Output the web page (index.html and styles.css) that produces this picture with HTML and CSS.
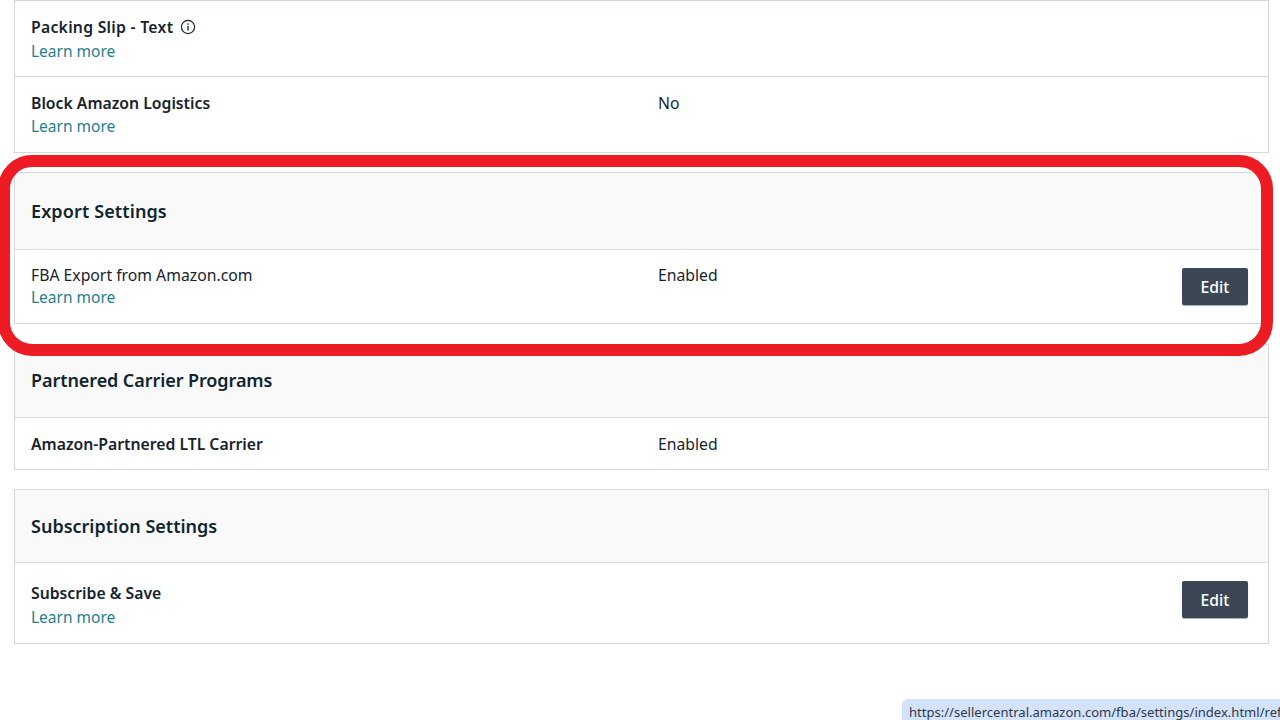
FILE: index.html
```html
<!DOCTYPE html>
<html lang="en">
<head>
<meta charset="utf-8">
<title>FBA Settings</title>
<link rel="stylesheet" href="styles.css">
</head>
<body>
<main class="page">
  <section class="card card-first">
    <div class="row row-76">
      <div class="label"><div class="name name-wide strong">Packing Slip - Text
        <svg class="info" viewBox="0 0 16 16" aria-hidden="true"><circle cx="8" cy="8" r="6.6" fill="none" stroke="#16232f" stroke-width="1.2"/><rect x="7.4" y="7" width="1.3" height="4.6" fill="#16232f"/><rect x="7.4" y="4.4" width="1.3" height="1.4" fill="#16232f"/></svg></div>
        <a class="link" href="#">Learn more</a></div>
      <div class="value"></div>
    </div>
    <div class="row row-75">
      <div class="label"><div class="name name-short strong">Block Amazon Logistics</div><a class="link" href="#">Learn more</a></div>
      <div class="value">No</div>
    </div>
  </section>
  <section class="card card-export">
    <h2 class="head head-tall">Export Settings</h2>
    <div class="row row-73">
      <div class="label"><div class="name name-tight">FBA Export from Amazon.com</div><a class="link" href="#">Learn more</a></div>
      <div class="value">Enabled</div>
      <button class="edit">Edit</button>
    </div>
  </section>
  <section class="card card-partner">
    <h2 class="head head-up">Partnered Carrier Programs</h2>
    <div class="row row-51">
      <div class="label"><div class="name strong">Amazon-Partnered LTL Carrier</div></div>
      <div class="value">Enabled</div>
    </div>
  </section>
  <section class="card">
    <h2 class="head">Subscription Settings</h2>
    <div class="row row-79">
      <div class="label"><div class="name strong">Subscribe &amp; Save</div><a class="link" href="#">Learn more</a></div>
      <div class="value"></div>
      <button class="edit">Edit</button>
    </div>
  </section>
</main>
<div class="highlight"></div>
<div class="status">https://sellercentral.amazon.com/fba/settings/index.html/ref</div>
</body>
</html>
```
FILE: styles.css
```css
html, body { margin: 0; padding: 0; height: 720px; overflow: hidden; background: #fff; }
body { font-family: "Noto Sans", "Open Sans", sans-serif; font-size: 15.75px; line-height: 22px; color: #16232f; position: relative; }
.page { padding: 0 11px 0 14px; display: flex; flex-direction: column; gap: 19px; }
.card { border: 1px solid #d5d9d9; }
.card-export { margin-bottom: 1px; }
.head { margin: 0; height: 72px; padding: 0 16px; display: flex; align-items: center; background: #f9f9f9; border-bottom: 1px solid #dcdfdf; font-size: 18px; font-weight: 600; color: #0f2530; box-sizing: content-box; }
.head-tall { height: 76px; letter-spacing: .12px; }
.head-up { height: 70px; padding-bottom: 2px; letter-spacing: -.08px; }
.row { display: grid; grid-template-columns: 627px 1fr auto; padding: 0 20px 0 16px; box-sizing: border-box; }
.row + .row { border-top: 1px solid #d5d9d9; }
.row-76 { height: 75px; padding-top: 15px; }
.row-75 { height: 76px; padding-top: 15px; }
.row-73 { height: 73px; padding-top: 14px; }
.row-51 { height: 51px; padding-top: 15px; }
.row-79 { height: 80px; padding-top: 19px; }
.name { height: 24px; }
.name-wide { letter-spacing: .27px; }
.name-short { height: 23px; }
.name-tight { height: 22px; }
.strong { font-weight: 600; }
.name .info { width: 16px; height: 16px; vertical-align: -2px; margin-left: 2px; }
.link { color: #25808c; text-decoration: none; display: block; font-size: 15.5px; }
.value { color: #16232f; }
.edit { width: 66px; height: 37px; margin: 4px 0 0; border: 0; border-radius: 2px; background: #3b4755; color: #fff; font: 500 15.75px "Noto Sans", sans-serif; box-shadow: 0 1px 1px #a3abb3; padding: 0; }
.row-79 .edit { margin-top: -1px; }
.highlight { position: absolute; left: -2px; top: 155px; width: 1275px; height: 201px; box-sizing: border-box; border: 12px solid #ed1c24; border-radius: 34px; }
.status { position: absolute; left: 902px; top: 699px; width: 378px; height: 21px; box-sizing: border-box; padding: 3px 0 0 7px; background: #d3e3fd; border-top-left-radius: 6px; font: 13.05px/20px "Noto Sans", sans-serif; color: #2e3a46; white-space: nowrap; overflow: hidden; }
```
